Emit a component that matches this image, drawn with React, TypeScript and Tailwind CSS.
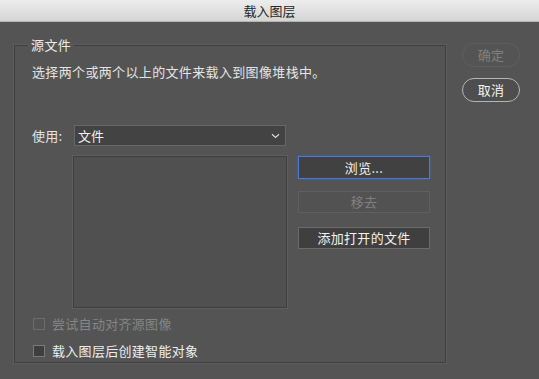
import React from "react";

const font = { fontFamily: '"Noto Sans CJK SC", "Noto Sans", sans-serif' };

export default function App() {
  return (
    <div
      className="w-[539px] h-[379px] bg-[#545454] flex flex-col overflow-hidden text-[13px] leading-[18px]"
      style={font}
    >
      <div className="h-[22px] shrink-0 bg-gradient-to-b from-[#ededed] to-[#d5d5d5] border-b border-[#b5b5b5] flex items-center justify-center text-[13px] text-[#262626]">
        载入图层
      </div>
      <div className="flex items-start">
        <fieldset className="ml-[14px] mt-[14px] w-[432px] h-[327px] border border-[#3f3f3f] shadow-[0_0_0_1px_#5c5c5c] pl-[17px] pr-0 pb-0 flex flex-col">
          <legend className="ml-[-4px] px-[3px] text-[13px] text-[#ececec] tracking-[0.4px]">源文件</legend>
          <div className="mt-[9px] text-[#e4e4e4] tracking-[0.35px]">选择两个或两个以上的文件来载入到图像堆栈中。</div>
          <div className="mt-[44px] flex items-center">
            <span className="text-[#e4e4e4] w-[42px] tracking-[0.3px]">使用:</span>
            <div className="w-[212px] h-[21px] bg-[#434343] border border-[#676767] flex items-center justify-between pl-[3px] pr-[5px] text-[#f2f2f2]">
              <span>文件</span>
              <svg width="9" height="6" viewBox="0 0 9 6" fill="none">
                <path d="M1 1.2 L4.5 4.5 L8 1.2" stroke="#d8d8d8" strokeWidth="1.2" />
              </svg>
            </div>
          </div>
          <div className="mt-[10px] flex items-start">
            <div className="ml-[41px] w-[214px] h-[152px] bg-[#505050] border border-[#3e3e3e] shadow-[0_0_0_1px_#5e5e5e]"></div>
            <div className="ml-[11px] flex flex-col w-[132px]">
              <div className="h-[23px] bg-[#414141] border border-[#4d78d6] shadow-[0_0_2px_#3a66c4] flex items-center justify-center text-[#f2f2f2] tracking-[0.3px]">
                浏览...
              </div>
              <div className="mt-[12px] h-[22px] border border-[#5f5f5f] bg-[#525252] flex items-center justify-center text-[#808080] tracking-[0.3px]">
                移去
              </div>
              <div className="mt-[14px] h-[22px] bg-[#3f3f3f] border border-[#6a6a6a] flex items-center justify-center text-[#f2f2f2] tracking-[0.3px]">
                添加打开的文件
              </div>
            </div>
          </div>
          <div className="mt-[7px] flex items-center">
            <div className="ml-[1px] w-[12px] h-[12px] border border-[#6c6c6c]"></div>
            <span className="ml-[7px] text-[#858585] tracking-[0.3px]">尝试自动对齐源图像</span>
          </div>
          <div className="mt-[9px] flex items-center">
            <div className="ml-[1px] w-[12px] h-[12px] border border-[#7a7a7a] bg-[#3e3e3e]"></div>
            <span className="ml-[7px] text-[#eeeeee] tracking-[0.3px]">载入图层后创建智能对象</span>
          </div>
        </fieldset>
        <div className="ml-[16px] mt-[21px] w-[58px] flex flex-col">
          <div className="h-[24px] rounded-full border border-[#5f5f5f] flex items-center justify-center text-[#808080] tracking-[0.3px]">
            确定
          </div>
          <div className="mt-[11px] h-[24px] rounded-full border border-[#b5b5b5] bg-[#4e4e4e] flex items-center justify-center text-[#f4f4f4] tracking-[0.3px]">
            取消
          </div>
        </div>
      </div>
    </div>
  );
}
